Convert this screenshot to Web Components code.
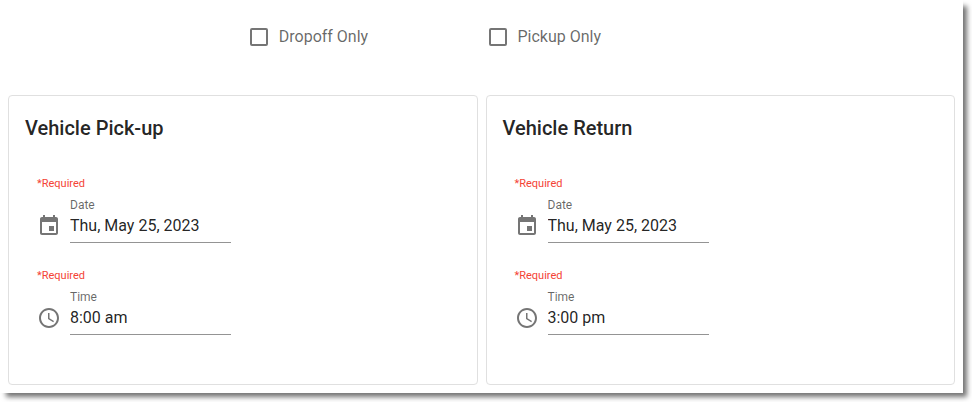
<!DOCTYPE html>
<html lang="en">
<head>
<meta charset="utf-8">
<title>Vehicle reservation</title>
<style>
body { margin: 0; background: #fff; font-family: Roboto, "Open Sans", sans-serif; color: rgba(0,0,0,.87); }
</style>
</head>
<body>
<booking-panel>
  <check-option slot="options" label="Dropoff Only"></check-option>
  <check-option slot="options" label="Pickup Only"></check-option>
  <trip-card heading="Vehicle Pick-up">
    <picker-field label="Date" value="Thu, May 25, 2023" icon="event"></picker-field>
    <picker-field label="Time" value="8:00 am" icon="clock"></picker-field>
  </trip-card>
  <trip-card heading="Vehicle Return">
    <picker-field label="Date" value="Thu, May 25, 2023" icon="event"></picker-field>
    <picker-field label="Time" value="3:00 pm" icon="clock"></picker-field>
  </trip-card>
</booking-panel>

<template id="booking-panel">
  <style>
    :host { display: block; padding: 0 9px 9px 0; }
    main { padding: 0 8px 8px; background: #fff; box-shadow: 5px 5px 5px -1px rgba(0,0,0,.55); }
    .options { display: grid; grid-template-columns: repeat(4, 1fr); margin: 0 -4px; padding: 25px 0 46px; }
    ::slotted(check-option:first-child) { grid-column-start: 2; }
    .cards { display: grid; grid-template-columns: 1fr 1fr; gap: 8px; }
  </style>
  <main>
    <div class="options"><slot name="options"></slot></div>
    <div class="cards"><slot></slot></div>
  </main>
</template>

<template id="check-option">
  <style>
    :host { display: block; padding-left: 7px; }
    label { display: flex; align-items: center; gap: 11px; font-size: 16px; line-height: 24px; color: rgba(0,0,0,.6); white-space: nowrap; }
    input { appearance: none; box-sizing: border-box; width: 18px; height: 18px; margin: 0; border: 2px solid #757575; border-radius: 2px; background: #fff; }
    input:checked { background: #757575; box-shadow: inset 0 0 0 3px #fff; }
  </style>
  <label><input type="checkbox"><span></span></label>
</template>

<template id="trip-card">
  <style>
    :host { display: block; border: 1px solid #e0e0e0; border-radius: 4px; padding: 16px 16px 49px; }
    h2 { margin: 0 0 32px; font-size: 20px; line-height: 32px; font-weight: 500; }
    .fields { display: grid; gap: 25px; padding: 0 12px; }
  </style>
  <section>
    <h2></h2>
    <div class="fields"><slot></slot></div>
  </section>
</template>

<template id="picker-field">
  <style>
    :host { display: block; }
    .required { font-size: 11px; line-height: 16px; color: #f44336; }
    .row { display: flex; align-items: flex-end; gap: 9px; padding-top: 5px; }
    svg { display: block; flex: none; width: 24px; height: 24px; margin-bottom: 5px; fill: #757575; }
    .control { width: 161px; border-bottom: 1px solid #949494; }
    label { display: block; font-size: 12px; line-height: 16px; color: rgba(0,0,0,.6); }
    input { display: block; box-sizing: border-box; width: 100%; height: 24px; margin: 1px 0 4px; padding: 0; border: 0; outline: 0; background: none; font: inherit; font-size: 16px; line-height: 24px; color: inherit; }
  </style>
  <div class="required" id="hint">*Required</div>
  <div class="row">
    <svg viewBox="0 0 24 24" aria-hidden="true"><path/></svg>
    <div class="control">
      <label for="field"></label>
      <input id="field" type="text" required aria-describedby="hint">
    </div>
  </div>
</template>

<script>
const icons = {
  event: "M17 12h-5v5h5v-5zM16 1v2H8V1H6v2H5c-1.11 0-1.99.9-1.99 2L3 19c0 1.1.89 2 2 2h14c1.1 0 2-.9 2-2V5c0-1.1-.9-2-2-2h-1V1h-2zm3 18H5V8h14v11z",
  clock: "M11.99 2C6.47 2 2 6.48 2 12s4.47 10 9.99 10C17.52 22 22 17.52 22 12S17.52 2 11.99 2zM12 20c-4.42 0-8-3.58-8-8s3.58-8 8-8 8 3.58 8 8-3.58 8-8 8zM12.5 7H11v6l5.25 3.15.75-1.23-4.5-2.67z"
};
class Base extends HTMLElement {
  constructor() {
    super();
    const t = document.getElementById(this.localName);
    this.attachShadow({ mode: "open" }).append(t.content.cloneNode(true));
  }
  find(selector) { return this.shadowRoot.querySelector(selector); }
}
customElements.define("booking-panel", class extends Base {});
customElements.define("check-option", class extends Base {
  connectedCallback() { this.find("span").textContent = this.getAttribute("label"); }
});
customElements.define("trip-card", class extends Base {
  connectedCallback() { this.find("h2").textContent = this.getAttribute("heading"); }
});
customElements.define("picker-field", class extends Base {
  connectedCallback() {
    this.find("label").textContent = this.getAttribute("label");
    this.find("input").value = this.getAttribute("value");
    this.find("path").setAttribute("d", icons[this.getAttribute("icon")]);
  }
});
</script>
</body>
</html>
